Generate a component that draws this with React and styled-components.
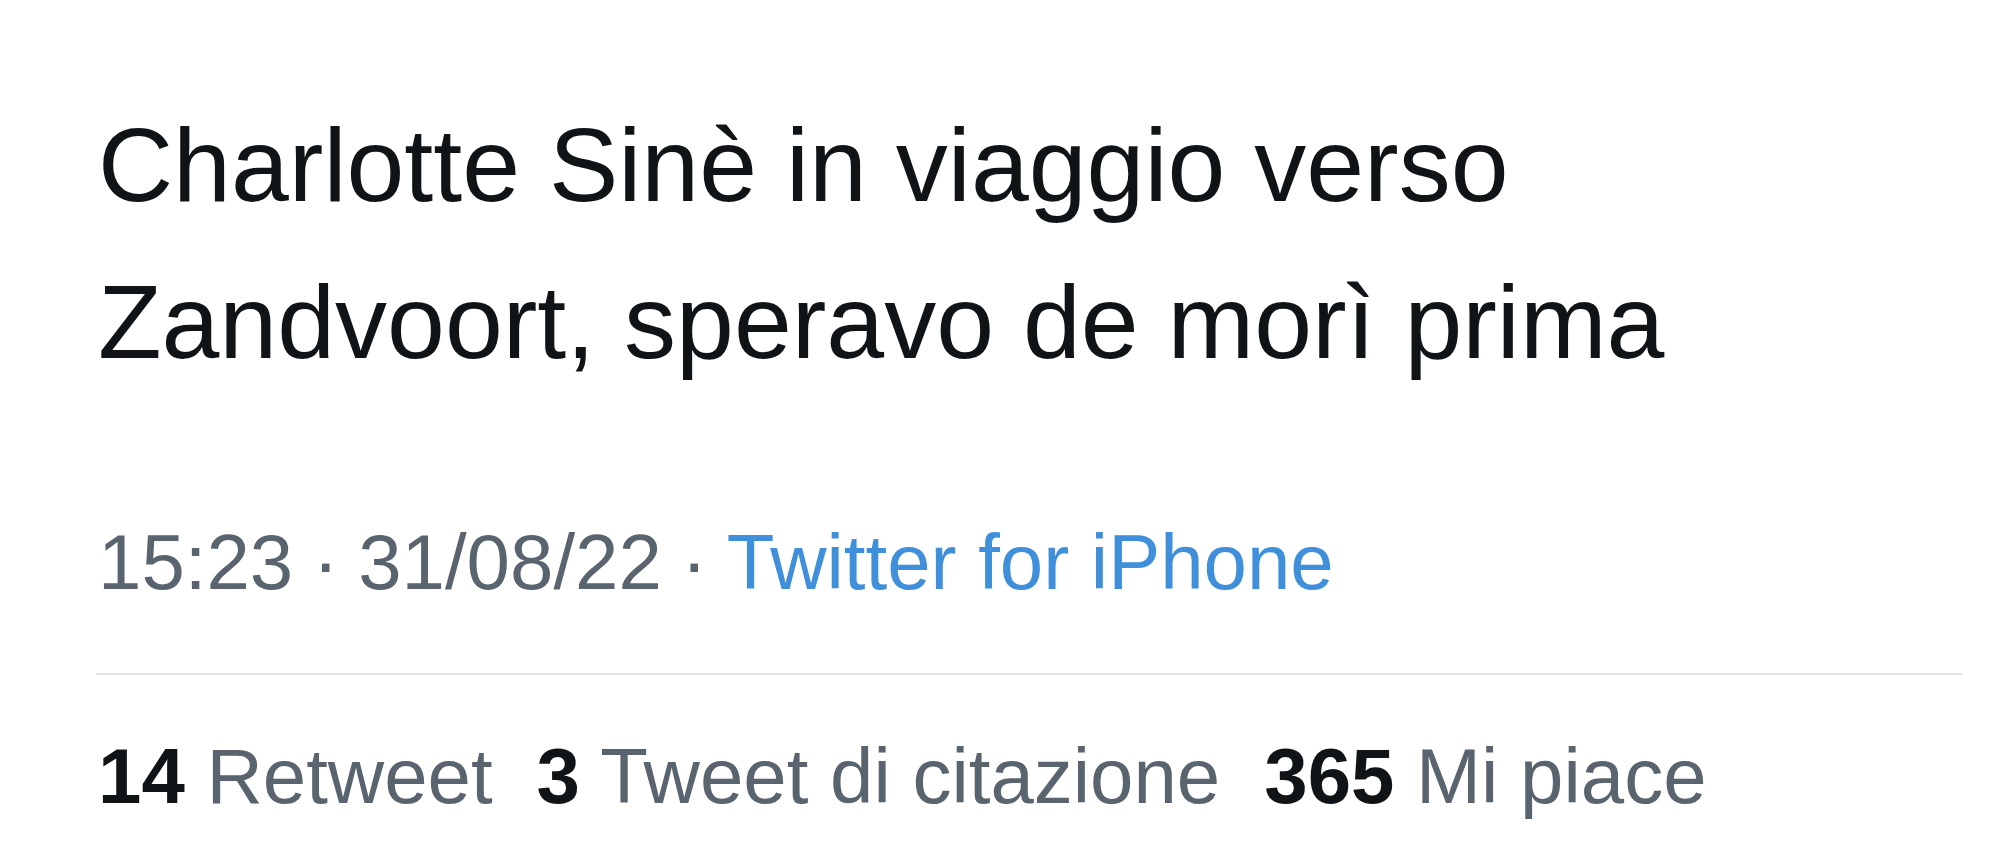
import React from "react";
import styled, { createGlobalStyle } from "styled-components";

const Global = createGlobalStyle`
  html, body { margin: 0; padding: 0; background: #ffffff; }
  body { font-family: "Liberation Sans", Arial, sans-serif; }
`;

const Page = styled.main`
  width: 2000px;
  height: 864px;
  box-sizing: border-box;
  padding: 87px 38px 0 96px;
  background: #ffffff;
  overflow: hidden;
`;

const TweetText = styled.p`
  margin: 0 0 0 2px;
  font-size: 104px;
  line-height: 157px;
  color: #111417;
  font-weight: 400;
`;

const Meta = styled.div`
  margin: 114px 0 0 2px;
  display: flex;
  align-items: baseline;
  font-size: 78px;
  line-height: 94px;
  color: #59646e;
  white-space: nowrap;
`;

const Dot = styled.span`
  padding: 0 0.25em;
`;

const Source = styled.span`
  color: #3f8fdb;
`;

const Divider = styled.hr`
  margin: 64px 0 0 0;
  border: 0;
  height: 2px;
  background: #e1e3e5;
`;

const Stats = styled.div`
  margin: 54px 0 0 2px;
  display: flex;
  align-items: baseline;
  gap: 44px;
  font-size: 78px;
  line-height: 94px;
  color: #59646e;
  white-space: nowrap;
`;

const Stat = styled.span``;

const Count = styled.strong`
  font-weight: 700;
  color: #111417;
`;

const stats = [
  { n: "14", label: "Retweet" },
  { n: "3", label: "Tweet di citazione" },
  { n: "365", label: "Mi piace" },
];

export default function App() {
  return (
    <>
      <Global />
      <Page>
        <TweetText>
          Charlotte Sinè in viaggio verso
          <br />
          Zandvoort, speravo de morì prima
        </TweetText>
        <Meta>
          <span>15:23</span>
          <Dot>·</Dot>
          <span>31/08/22</span>
          <Dot>·</Dot>
          <Source>Twitter for iPhone</Source>
        </Meta>
        <Divider />
        <Stats>
          {stats.map((s) => (
            <Stat key={s.label}>
              <Count>{s.n}</Count> {s.label}
            </Stat>
          ))}
        </Stats>
      </Page>
    </>
  );
}
